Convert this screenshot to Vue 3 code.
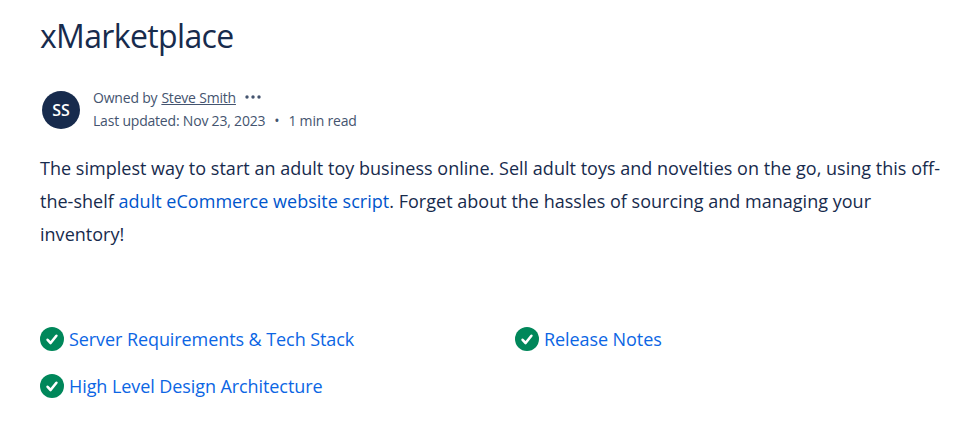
<template>
  <div class="page">
    <h1 class="title">xMarketplace</h1>
    <div class="byline">
      <div class="avatar">SS</div>
      <div class="meta">
        <div class="owner">
          <span>Owned by</span>
          <a class="author">Steve Smith</a>
          <svg class="more" width="16" height="4" viewBox="0 0 16 4">
            <circle v-for="x in [2, 8, 14]" :key="x" :cx="x" cy="2" r="1.7" fill="#44546f" />
          </svg>
        </div>
        <div class="updated">
          <span>Last updated: Nov 23, 2023</span>
          <span class="dot">•</span>
          <span>1 min read</span>
        </div>
      </div>
    </div>
    <p class="intro">
      The simplest way to start an adult toy business online. Sell adult toys and novelties on the go, using this off-<br>the-shelf
      <a class="inline-link">adult eCommerce website script</a>. Forget about the hassles of sourcing and managing your<br>inventory!
    </p>
    <div class="links">
      <div v-for="item in links" :key="item" class="link-item">
        <svg class="check" width="24" height="24" viewBox="0 0 24 24">
          <circle cx="12" cy="12" r="12" fill="#00875a" />
          <path d="M7.6 12.8l3 3.2 5.8-7.2" fill="none" stroke="#fff" stroke-width="2.6" stroke-linecap="round" stroke-linejoin="round" />
        </svg>
        <a class="task-link">{{ item }}</a>
      </div>
    </div>
  </div>
</template>

<script setup>
const links = ['Server Requirements & Tech Stack', 'Release Notes', 'High Level Design Architecture']
</script>

<style>
html, body { background: #fff; }
</style>

<style scoped>
.page { width: 972px; height: 422px; overflow: hidden; box-sizing: border-box; padding: 0 30px 0 40px; font-family: "Open Sans", "Noto Sans", sans-serif; color: #172b4d; }
.title { margin: 0; padding-top: 14px; font-size: 32px; line-height: 44px; font-weight: 400; letter-spacing: -0.65px; }
.byline { display: flex; align-items: center; gap: 13px; margin: 29px 0 0 2px; }
.avatar { width: 38px; height: 38px; border-radius: 50%; background: #172b4d; color: #fff; font-size: 16px; font-weight: 600; display: flex; align-items: center; justify-content: center; }
.meta { font-size: 14px; color: #44546f; letter-spacing: -0.2px; }
.owner { display: flex; align-items: center; height: 20px; gap: 4px; }
.author { text-decoration: underline; }
.more { margin-left: 5px; }
.updated { display: flex; height: 26px; align-items: center; gap: 9px; }
.intro { margin: 19px 0 0; font-size: 18px; line-height: 33px; letter-spacing: 0.02px; white-space: nowrap; }
.inline-link { color: #0055cc; }
.links { display: grid; grid-template-columns: 475px 1fr; row-gap: 18px; margin-top: 73px; }
.link-item { display: flex; align-items: center; gap: 5px; height: 29px; }
.task-link { color: #0c66e4; font-size: 18px; letter-spacing: -0.08px; }
</style>
